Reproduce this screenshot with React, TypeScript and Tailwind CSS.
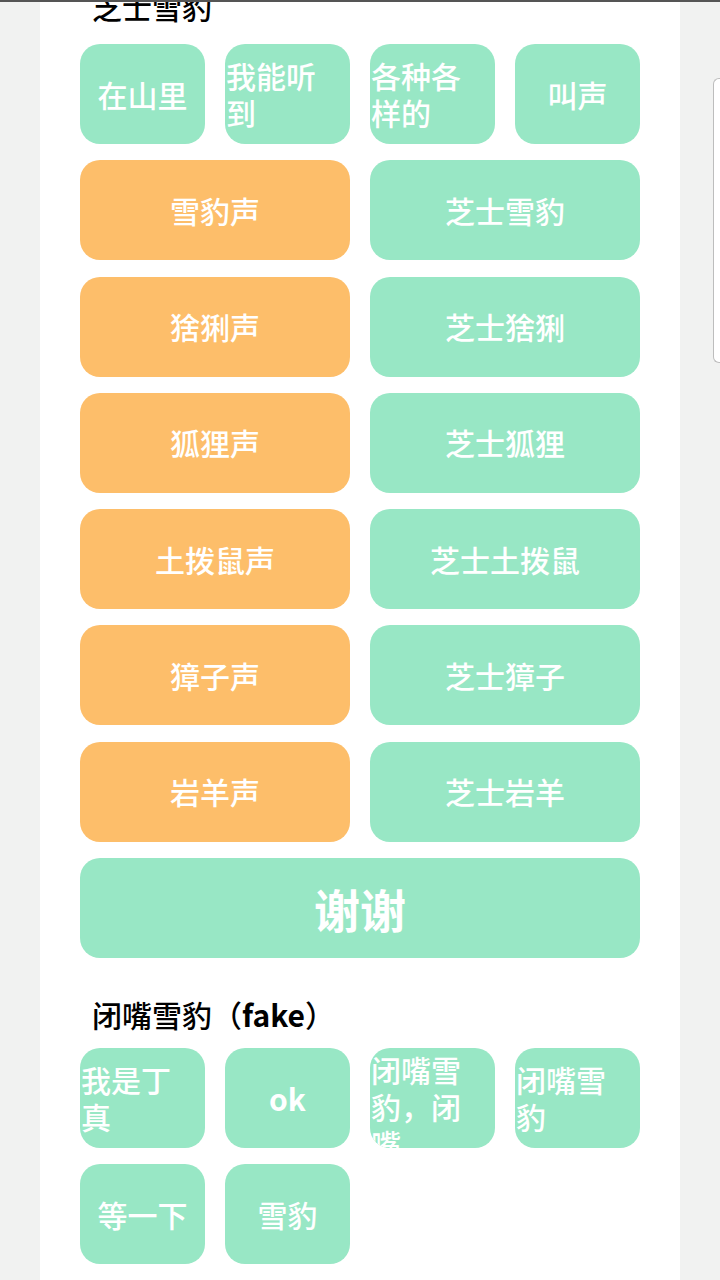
import React from 'react';

const font = { fontFamily: '"Noto Sans CJK SC", "Noto Sans", sans-serif' };

type SmallItem = { text: string; wrap?: boolean; top?: boolean; bold?: boolean };

const topRow: SmallItem[] = [
  { text: '在山里' },
  { text: '我能听到', wrap: true },
  { text: '各种各样的', wrap: true },
  { text: '叫声' },
];

const sounds = [
  ['雪豹声', '芝士雪豹'],
  ['猞猁声', '芝士猞猁'],
  ['狐狸声', '芝士狐狸'],
  ['土拨鼠声', '芝士土拨鼠'],
  ['獐子声', '芝士獐子'],
  ['岩羊声', '芝士岩羊'],
];

const fakeRow: SmallItem[] = [
  { text: '我是丁真', wrap: true },
  { text: 'ok', bold: true },
  { text: '闭嘴雪豹，闭嘴', wrap: true, top: true },
  { text: '闭嘴雪豹', wrap: true },
  { text: '等一下' },
  { text: '雪豹' },
];

function SmallButton({ item }: { item: SmallItem }) {
  return (
    <div
      className={`w-[125px] h-[100px] rounded-[20px] bg-[#98e7c5] overflow-hidden flex text-white text-[30px] leading-[37px] ${
        item.wrap ? 'justify-start text-left pl-[1px]' : 'justify-center text-center'
      } ${item.top ? 'items-start pt-[3px]' : 'items-center'} ${item.bold ? 'font-bold' : 'font-medium'}`}
    >
      <span className={item.wrap ? 'w-[100px]' : ''}>{item.text}</span>
    </div>
  );
}

export default function App() {
  return (
    <div style={font} className="relative w-[720px] h-[1280px] overflow-hidden bg-[#f1f2f1] flex justify-center">
      <div className="absolute top-0 left-0 w-full h-[2px] bg-[#555]" />
      <div className="w-[640px] h-full bg-white px-[40px] flex flex-col">
        <h1 className="mt-[-12px] pl-[12px] text-[30px] leading-[36px] font-medium text-black">芝士雪豹</h1>
        <div className="mt-[20px] flex gap-[20px]">
          {topRow.map((it, i) => (
            <SmallButton key={i} item={it} />
          ))}
        </div>
        <div className="mt-[16.3px] flex flex-col gap-[16.3px]">
          {sounds.map(([a, b], i) => (
            <div key={i} className="flex gap-[20px]">
              <div className="w-[270px] h-[100px] rounded-[20px] bg-[#fdbe6a] flex items-center justify-center text-white text-[30px] font-medium">
                {a}
              </div>
              <div className="w-[270px] h-[100px] rounded-[20px] bg-[#98e7c5] flex items-center justify-center text-white text-[30px] font-medium">
                {b}
              </div>
            </div>
          ))}
          <div className="w-[560px] h-[100px] rounded-[20px] bg-[#98e7c5] flex items-center justify-center text-white text-[46px] font-bold">
            谢谢
          </div>
        </div>
        <h2 className="mt-[38px] pl-[12px] text-[30px] leading-[36px] font-medium text-black">
          闭嘴雪豹（<span className="font-bold">fake</span>）
        </h2>
        <div className="mt-[16px] grid grid-cols-[repeat(4,125px)] gap-x-[20px] gap-y-[16px]">
          {fakeRow.map((it, i) => (
            <SmallButton key={i} item={it} />
          ))}
        </div>
      </div>
      <div className="absolute right-0 top-[78px] w-[7px] h-[285px] bg-white border border-r-0 border-[#bdbdbd] rounded-l-[6px]" />
    </div>
  );
}
